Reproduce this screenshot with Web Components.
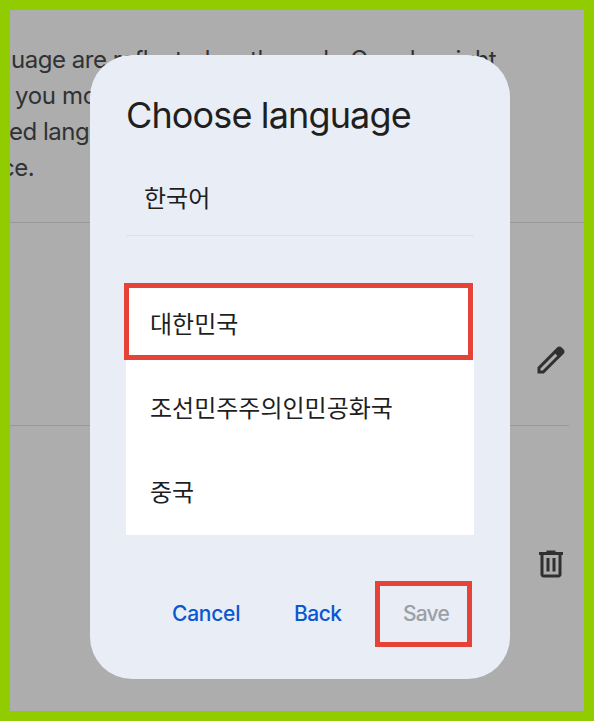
<!DOCTYPE html>
<html lang="en">
<head>
<meta charset="utf-8">
<title>Choose language</title>
<style>
html,body{margin:0;height:100%;overflow:hidden}
body{font-family:Inter,"Noto Sans CJK KR",sans-serif;color:#1f1f1f}
</style>
</head>
<body>
<app-frame>
  <settings-page>
    <text-line style="--ls:-.47px;--in:1px">uage are reflected on the web. Google might</text-line>
    <text-line style="--ls:-.35px;--in:5px">you mo</text-line>
    <text-line style="--ls:-.5px;--in:-1px">ed lang</text-line>
    <text-line style="--ls:-.5px;--in:-9px">ce.</text-line>
    <icon-row slot="rows" icon="edit" style="--h:203px;--end:15px"></icon-row>
    <icon-row slot="rows" icon="delete" style="--h:275px;--end:574px;--top:120px"></icon-row>
  </settings-page>
  <language-dialog slot="overlay">
    <span slot="title">Choose language</span>
    <span slot="selected">한국어</span>
    <region-option marked>대한민국</region-option>
    <region-option>조선민주주의인민공화국</region-option>
    <region-option>중국</region-option>
    <dialog-button slot="actions" style="--w:68px;--ls:-.25px">Cancel</dialog-button>
    <dialog-button slot="actions" style="--w:55px;--ls:-.5px">Back</dialog-button>
    <dialog-button slot="actions" disabled marked style="--w:46px;--ls:-.8px">Save</dialog-button>
  </language-dialog>
</app-frame>
<script>
const define = (name, html) => customElements.define(name, class extends HTMLElement {
  constructor() {
    super();
    this.attachShadow({mode: 'open'}).innerHTML = typeof html === 'function' ? html(this) : html;
  }
});

define('app-frame', `<style>
:host{display:block;box-sizing:border-box;position:relative;width:594px;height:721px;border:10px solid #90cc00;background:#adadad;overflow:hidden}
</style><slot></slot><slot name="overlay"></slot>`);

define('settings-page', `<style>
:host{display:flex;flex-direction:column;height:100%}
.copy{box-sizing:border-box;height:213px;padding-top:32px;border-bottom:1px solid #999}
</style><div class="copy"><slot></slot></div><slot name="rows"></slot>`);

define('text-line', `<style>
:host{display:block;height:36px;line-height:36px;font-size:24px;white-space:pre;color:#303234;letter-spacing:var(--ls);text-indent:var(--in)}
</style><slot></slot>`);

const icons = {
  edit: `<svg width="36" height="36" viewBox="0 0 24 24"><path fill-rule="evenodd" d="M3 21v-4.25L16.2 3.58q.3-.28.66-.43.37-.15.77-.15t.78.15q.37.15.65.45L20.42 5q.3.28.44.65.14.38.14.75 0 .4-.14.76-.14.37-.44.67L7.25 21ZM5 19h1.4l9.83-9.8-.7-.72-.73-.7L5 17.6Z"/></svg>`,
  delete: `<svg width="36" height="36" viewBox="0 0 24 24"><path fill-rule="evenodd" d="M7 21q-.83 0-1.41-.59Q5 19.83 5 19V6H4V4h5V3h6v1h5v2h-1v13q0 .83-.59 1.41Q17.83 21 17 21ZM17 6H7v13h10ZM9 17h2V8H9Zm4 0h2V8h-2Z"/></svg>`
};
define('icon-row', el => `<style>
:host{display:flex;flex:none;box-sizing:border-box;height:var(--h);padding:var(--top,119px) 15px 0 0;justify-content:flex-end;background:linear-gradient(#999,#999) left bottom/calc(100% - var(--end,0px)) 1px no-repeat}
svg{display:block;fill:#303030}
</style>${icons[el.getAttribute('icon')]}`);

define('language-dialog', `<style>
:host{position:absolute;left:80px;top:45px;box-sizing:border-box;width:420px;height:624px;border-radius:42px;background:#e8edf6;padding:0 36px;display:flex;flex-direction:column}
h1{margin:0;height:120px;font:400 36px/120px Inter,sans-serif;letter-spacing:-.86px;white-space:nowrap}
.field{box-sizing:border-box;height:61px;padding:1px 18px 0;line-height:42px;font-size:24px;font-family:"Noto Sans CJK KR",sans-serif;border-bottom:1px solid #dde1e9}
.list{margin-top:47px;height:252px;background:#fff}
.actions{display:flex;justify-content:flex-end;gap:54px;margin-top:46px;padding-right:25px;height:66px;align-items:center}
</style><h1><slot name="title"></slot></h1><div class="field"><slot name="selected"></slot></div><div class="list"><slot></slot></div><div class="actions"><slot name="actions"></slot></div>`);

define('region-option', `<style>
:host{display:block;position:relative;height:84px;line-height:80px;padding-left:24px;font-size:24px;font-family:"Noto Sans CJK KR",sans-serif;white-space:nowrap}
:host([marked])::after{content:"";position:absolute;box-sizing:border-box;left:-2px;top:0;width:349px;height:77px;border:5px solid #e64338}
</style><slot></slot>`);

define('dialog-button', `<style>
:host{display:block;position:relative;width:var(--w);height:30px}
button{all:unset;display:block;font:500 21px/29px Inter,sans-serif;letter-spacing:var(--ls);color:#0b57d0;white-space:nowrap}
:host([disabled]) button{color:#9b9fa7}
:host([marked])::after{content:"";position:absolute;box-sizing:border-box;left:-28px;top:-18px;width:97px;height:66px;border:5px solid #e64338}
</style><button><slot></slot></button>`);
</script>
</body>
</html>
